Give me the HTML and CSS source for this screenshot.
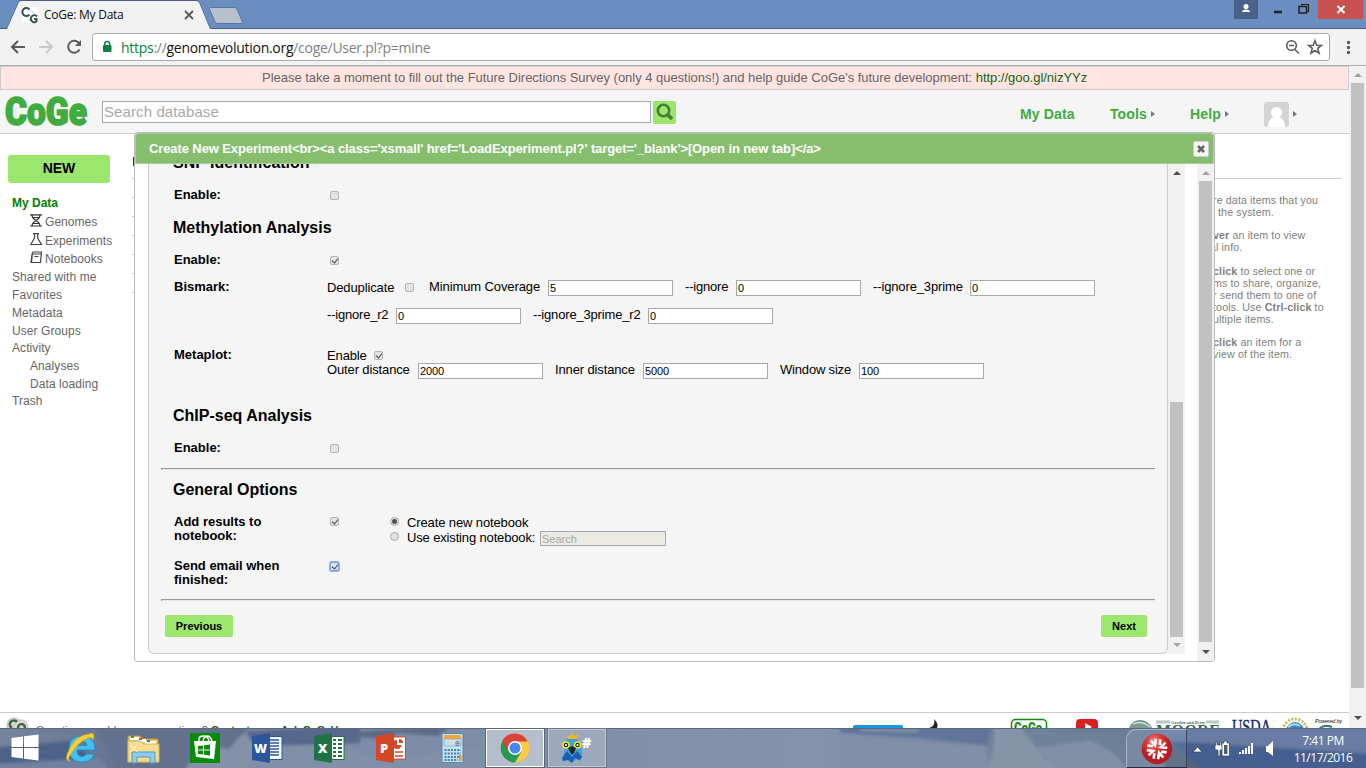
FILE: index.html
```html
<!DOCTYPE html>
<html lang="en">
<head>
<meta charset="utf-8">
<title>CoGe: My Data</title>
<link rel="stylesheet" href="styles.css">
</head>
<body>
<div class="screen">
  <div class="titlebar">
    <svg class="tab-shapes" width="280" height="29" viewBox="0 0 280 29">
      <path d="M0 28.5H7L19 1.5Q20 .5 22 .5H196Q198 .5 199 2L210 28.5H280" fill="none" stroke="#485d8a"/>
      <path d="M7 29L19 2Q20 1 22 1H196Q198 1 199 2.500L210 29Z" fill="#f2f2f2"/>
      <path d="M210 7.500H234Q236 7.500 237 9L242.500 22Q243 23.500 241 23.500H218Q216 23.500 215 22L209.500 9Q209 7.500 210 7.500Z" fill="#b8c1cb" stroke="#5577a8"/>
      <rect x="22" y="7" width="16" height="16" fill="#fff"/>
      <path d="M29.500 9.500A4 4 0 1 0 29.500 14.500M37 16.500A3.500 3.500 0 1 0 36.500 21.500V19H34" fill="none" stroke="#34525e" stroke-width="2"/>
      <path d="M29 9L36 15M25 16L30 21" stroke="#6fae65" stroke-dasharray="1 1"/>
      <path d="M185 11L193 19M193 11L185 19" stroke="#5a5a5a" stroke-width="1.800"/>
    </svg>
    <span class="tab-title">CoGe: My Data</span>
    <div class="window-buttons">
      <svg width="24" height="19"><rect width="24" height="19" fill="#4a628a"/><circle cx="12" cy="6.500" r="2.500" fill="#fff"/><path d="M8 12Q8 9.500 12 9.500T16 12Z" fill="#fff"/></svg>
      <svg width="38" height="19"><path d="M16 12H24" stroke="#222" stroke-width="2.500"/></svg>
      <svg width="22" height="19"><path d="M5.500 5.500V4.500H12.500V11.500H11" stroke="#222" fill="none" stroke-width="1.200"/><rect x="3" y="6.500" width="7.500" height="6.500" stroke="#222" fill="none" stroke-width="1.500"/></svg>
      <svg width="45" height="19"><rect width="45" height="19" fill="#c75050"/><path d="M19.500 6L26.500 13M26.500 6L19.500 13" stroke="#fff" stroke-width="2"/></svg>
    </div>
  </div>

  <div class="toolbar">
    <svg class="nav" width="92" height="36" viewBox="0 29 92 36">
      <path d="M12 47H25M18 41L12 47L18 53" fill="none" stroke="#5a5a5a" stroke-width="2"/>
      <path d="M39 47H52M46 41L52 47L46 53" fill="none" stroke="#c9c9c9" stroke-width="2"/>
      <path d="M79.200 43.500A6 6 0 1 0 79.500 49.500" fill="none" stroke="#5a5a5a" stroke-width="2"/><path d="M81 40V46H75Z" fill="#5a5a5a"/>
    </svg>
    <div class="address">
      <svg width="28" height="26"><rect x="10" y="11" width="8.500" height="7" rx="1" fill="#0b8043"/><path d="M11.800 11V9.500Q11.800 7.500 14.200 7.500T16.600 9.500V11" fill="none" stroke="#0b8043" stroke-width="1.500"/></svg>
      <span class="url"><span class="secure">https</span>://<b>genomevolution.org</b>/coge/User.pl?p=mine</span>
      <svg class="address-icons" width="47" height="26"><circle cx="9.500" cy="11.500" r="4.800" fill="none" stroke="#5a5a5a" stroke-width="1.600"/><path d="M7 11.500H12M13 15.500L17 19.500" stroke="#5a5a5a" stroke-width="1.500"/><path d="M33 6.500L34.700 11.200L39.500 11.400L35.700 14.400L37.100 19.200L33 16.500L28.900 19.200L30.300 14.400L26.500 11.400L31.300 11.200Z" fill="none" stroke="#5a5a5a" stroke-width="1.500"/></svg>
    </div>
    <svg class="menu-dots" width="16" height="36"><g fill="#5a5a5a"><circle cx="8.500" cy="13.500" r="1.700"/><circle cx="8.500" cy="18.500" r="1.700"/><circle cx="8.500" cy="23.500" r="1.700"/></g></svg>
  </div>

  <div class="viewport">
    <div class="page">
      <div class="notice"><span>Please take a moment to fill out the Future Directions Survey (only 4 questions!) and help guide CoGe's future development: <a>http://goo.gl/nizYYz</a></span></div>
      <header class="site-header">
        <svg class="logo" width="90" height="43"><text x="5" y="34.500" textLength="82" lengthAdjust="spacingAndGlyphs">CoGe</text></svg>
        <div class="site-search">Search database</div>
        <div class="search-button"><svg width="23" height="23"><circle cx="10.500" cy="9.500" r="5.700" fill="none" stroke="#4c7b37" stroke-width="2.600"/><path d="M14.500 13.500L19 18" stroke="#4c7b37" stroke-width="3.500"/></svg></div>
        <nav class="site-menu">
          <span class="menu-data">My Data</span>
          <span class="menu-tools">Tools<i></i></span>
          <span class="menu-help">Help<i></i></span>
          <span class="menu-user"><svg width="25" height="25"><rect width="25" height="25" rx="3" fill="#d4d4d4"/><circle cx="12.500" cy="10.500" r="5.500" fill="#fff"/><path d="M4 25Q4 17 10 15H15Q21 17 21 25Z" fill="#fff"/></svg><i></i></span>
        </nav>
      </header>

      <div class="body">
        <aside class="sidebar">
          <div class="new-button">NEW</div>
          <ul>
            <li class="current">My Data</li>
            <li class="sub"><svg width="13" height="13"><path d="M0 .8H12M0 12H12M2 1Q2 4 6 6.500T10 12M10 1Q10 4 6 6.500T2 12M3 3.500H9M3 9.500H9" fill="none" stroke="#333" stroke-width="1.200"/></svg><span>Genomes</span></li>
            <li class="sub"><svg width="13" height="13"><path d="M3 .7H9M4.500 1V5L.8 11.500H11.500L7.700 5V1" fill="none" stroke="#444" stroke-width="1.200"/></svg><span>Experiments</span></li>
            <li class="sub"><svg width="13" height="13"><path d="M3 1H11.500L10.500 11.500H1L2 3.500ZM2.500 1.500L1.500 11M3 3H11M4.500 5.500H8.500" fill="none" stroke="#444" stroke-width="1.200"/></svg><span>Notebooks</span></li>
            <li>Shared with me</li>
            <li>Favorites</li>
            <li>Metadata</li>
            <li class="tight">User Groups</li>
            <li>Activity</li>
            <li class="sub">Analyses</li>
            <li class="sub tight">Data loading</li>
            <li>Trash</li>
          </ul>
        </aside>
        <div class="list-lines"><b></b><i></i><i></i><i></i><i></i><i></i><i></i><i></i></div>
        <aside class="help">
          <hr>
          <p><span>re data items that you</span><span class="in">the system.</span></p>
          <p><span><b>ver</b> an item to view</span><span class="out">al info.</span></p>
          <p><span><b>click</b> to select one or</span><span>ms to share, organize,</span><span>r send them to one of</span><span>tools. Use <b>Ctrl-click</b> to</span><span>ultiple items.</span></p>
          <p><span><b>click</b> an item for a</span><span>view of the item.</span></p>
        </aside>
      </div>

      <footer class="site-footer">
        <svg class="coge-badge" width="36" height="15"><circle cx="14" cy="12" r="7" fill="#ddd" stroke="#bbb"/><circle cx="21" cy="14" r="7" fill="#ddd" stroke="#bbb"/><path d="M17 9A4 4 0 1 0 12 15M25 15A3.500 4 0 0 0 18 15" fill="none" stroke="#3f6b3b" stroke-width="2.600"/></svg>
        <span class="contact">Questions, problems, suggestions? <b>Contact us</b> or <b>Ask CoGeV</b></span>
        <svg class="sponsors" width="499" height="15" viewBox="850 713 499 15">
          <rect x="853" y="725" width="50" height="8" rx="2" fill="#1b95e0"/>
          <path d="M929 728Q936 726 934 719Q939 724 937 728Z" fill="#222"/>
          <rect x="1011.500" y="719.500" width="35" height="20" rx="4" fill="#fff" stroke="#138a13" stroke-width="1.500"/>
          <text x="1014" y="733" font-family="Roboto" font-weight="900" font-size="14" fill="#138a13" textLength="28" lengthAdjust="spacingAndGlyphs">CoGe</text>
          <rect x="1076" y="719" width="22" height="15" rx="4" fill="#d8201f"/><path d="M1085 723L1092 727L1085 731Z" fill="#fff"/>
          <path d="M1129 728Q1132 720 1140 720T1152 728Z" fill="#789c8e"/><path d="M1133 724Q1142 720 1150 727" stroke="#fff" fill="none"/>
          <path d="M1156 722H1170M1206 722H1219" stroke="#b6c8c0" stroke-width="3"/>
          <text x="1171" y="723.500" font-family="Liberation Serif" font-weight="700" font-size="4" fill="#376a57" textLength="34">Gordon and Betty</text>
          <text x="1156" y="736" font-family="Liberation Serif" font-weight="700" font-size="16" fill="#376a57" textLength="64">MOORE</text>
          <text x="1232" y="732.500" font-family="Liberation Serif" font-size="19" fill="#172a68" stroke="#172a68" stroke-width=".4" textLength="39" lengthAdjust="spacingAndGlyphs">USDA</text>
          <circle cx="1295" cy="731" r="12" fill="none" stroke="#d8b44d" stroke-width="3" stroke-dasharray="2 1.500"/><circle cx="1295" cy="731" r="9" fill="#3386c8"/><path d="M1288 727Q1294 722 1300 726" stroke="#b9d9ed" stroke-width="2" fill="none"/>
          <text x="1315" y="723" font-family="Liberation Sans" font-style="italic" font-size="5.500" fill="#111" textLength="27">Powered by</text>
          <path d="M1319 729Q1324 724 1332 727" stroke="#3d7790" stroke-width="2" fill="none"/>
        </svg>
      </footer>
    </div>
    <div class="page-scroll"><i class="up dim"></i><div class="thumb"></div><i class="down"></i></div>

    <section class="dialog">
      <div class="dialog-title"><span>Create New Experiment&lt;br&gt;&lt;a class='xsmall' href='LoadExperiment.pl?' target='_blank'&gt;[Open in new tab]&lt;/a&gt;</span>
        <div class="close"><svg width="14" height="14"><path d="M4 4L10 10M10 4L4 10" stroke="#666" stroke-width="2.600"/></svg></div>
      </div>
      <div class="dialog-body">
        <div class="panel">
          <h2 class="first">SNP Identification</h2>
          <div class="row h31"><label>Enable:</label><i class="check"></i></div>
          <h2>Methylation Analysis</h2>
          <div class="row h27"><label>Enable:</label><i class="check on"></i></div>
          <div class="row h68"><label>Bismark:</label>
            <div class="fields">
              <div class="line h28"><span class="low w-dedup">Deduplicate</span><i class="check"></i><span class="w-mincov">Minimum Coverage</span><div class="input">5</div><span class="w-ign">--ignore</span><div class="input">0</div><span class="w-ign3">--ignore_3prime</span><div class="input">0</div></div>
              <div class="line"><span class="w-r2">--ignore_r2</span><div class="input">0</div><span class="w-3r2">--ignore_3prime_r2</span><div class="input">0</div></div>
            </div>
          </div>
          <div class="row h59"><label>Metaplot:</label>
            <div class="fields">
              <div class="line h15"><span class="low w-en">Enable</span><i class="check on meta"></i></div>
              <div class="line"><span class="w-outer">Outer distance</span><div class="input">2000</div><span class="w-inner">Inner distance</span><div class="input">5000</div><span class="w-win">Window size</span><div class="input">100</div></div>
            </div>
          </div>
          <h2>ChIP-seq Analysis</h2>
          <div class="row h28"><label>Enable:</label><i class="check"></i></div>
          <hr>
          <h2>General Options</h2>
          <div class="row h44"><label class="two">Add results to<br>notebook:</label><i class="check on high"></i>
            <div class="choices">
              <div><i class="radio on"></i><span class="w-create">Create new notebook</span></div>
              <div><i class="radio"></i><span class="w-use">Use existing notebook:</span><div class="input disabled">Search</div></div>
            </div>
          </div>
          <div class="row h41"><label class="two">Send email when<br>finished:</label><i class="check on focus"></i></div>
          <hr>
          <div class="actions"><span class="button prev">Previous</span><span class="button next">Next</span></div>
        </div>
        <div class="scroll inner"><i class="up"></i><div class="thumb"></div><i class="down dim"></i></div>
        <div class="scroll outer"><i class="up dim"></i><div class="thumb"></div><i class="down"></i></div>
      </div>
    </section>
  </div>

  <div class="taskbar">
    <svg class="wallpaper" width="1366" height="40" viewBox="0 728 1366 40" preserveAspectRatio="none">
      <defs>
        <linearGradient id="sky"><stop offset="0" stop-color="#76849f"/><stop offset=".09" stop-color="#667491"/><stop offset=".19" stop-color="#78879f"/><stop offset=".25" stop-color="#7b8ba6"/><stop offset=".42" stop-color="#8190a8"/><stop offset=".6" stop-color="#8493ac"/><stop offset=".73" stop-color="#71849b"/><stop offset=".82" stop-color="#6d7f98"/><stop offset="1" stop-color="#65799f"/></linearGradient>
        <filter id="soft" x="-5%" y="-20%" width="110%" height="140%"><feGaussianBlur stdDeviation="1.500"/></filter>
      </defs>
      <rect y="728" width="1366" height="40" fill="url(#sky)"/>
      <g filter="url(#soft)">
        <path d="M-4 747L70 741L112 772H-4Z" fill="#4d6289"/><path d="M-4 764L100 758L110 772H-4Z" fill="#7281a0"/>
        <path d="M94 724H250L236 746Q210 752 183 772H117Z" fill="#64728c"/>
        <path d="M245 732L360 724V743L280 746L240 740Z" fill="#56698d"/>
        <path d="M183 772L196 755L209 757L218 747L229 750L236 740L246 732L253 745L250 772Z" fill="#8492a7"/>
        <path d="M253 749Q320 740 356 751T486 746V772H247Z" fill="#8090a9"/>
        <path d="M355 732L382 730L423 728H449L438 736L398 733L385 739L356 737Z" fill="#5c6a84"/>
        <path d="M840 738L900 741L985 746L990 772H840Z" fill="#8190a8"/>
        <path d="M840 724H860V731L918 733L920 724H992L988 745L920 738L840 733Z" fill="#61759a"/>
        <path d="M994 724H1018L1043 757L1061 772H986Q996 749 994 728Z" fill="#8495a8"/>
        <path d="M1035 748L1090 740Q1120 754 1128 772H1060Z" fill="#8191a5"/>
        <path d="M1168 724H1370V751L1170 741Z" fill="#687da4"/>
        <path d="M1170 741L1370 754V772H1200L1178 750Z" fill="#445f90"/>
        <path d="M1168 742L1180 750L1206 772H1164Z" fill="#52647c"/>
      </g>
      <path d="M0 728.500H1366" stroke="#59677f"/>
    </svg>
    <div class="start"><svg width="50" height="40"><g fill="#fff"><path d="M11.500 10L23 8.500V19H11.500ZM24 8.300L38.500 6.500V19H24ZM11.500 20H23V30.500L11.500 29ZM24 20H38.500V32.500L24 30.700Z"/></g></svg></div>
    <div class="app"><svg width="62" height="40"><path d="M45 22Q45 8 32 8Q19 8 19 21Q19 34 32 34Q42 34 44 26H36Q35 28.500 32 28.500Q27 28.500 27 22ZM27 17.500Q28 13 32 13T37 17.500Z" fill="#45bff0" fill-rule="evenodd" stroke="#198bc8" stroke-width=".8"/><path d="M20 33Q13 33 20 20T39 6Q46 3 43 12Q42 7 34 12T21 26Q17 31 20 33Z" fill="#f8cf31" stroke="#dba616" stroke-width=".7"/></svg></div>
    <div class="app"><svg width="62" height="40"><path d="M16 8H28L31 11H46V34H16Z" fill="#e6c76c" stroke="#b5933b"/><path d="M18 9H27V12H18ZM26 11H34V14H26ZM33 13H44V16H33Z" fill="#fff"/><path d="M19 8H22V10H19Z" fill="#3a9b38"/><path d="M27 10H30V12H27Z" fill="#c84e38"/><path d="M35 12H38V14H35Z" fill="#2e79b8"/><path d="M16 13H28L31 16H47V34H16Z" fill="#f5dd90" stroke="#d4b55d"/><path d="M20 35V24H43V35H38V29H25V35Z" fill="#8bcbed" stroke="#5699bd"/><path d="M19 24L25 17M19 17L25 24" stroke="#fff8cf"/></svg></div>
    <div class="app"><svg width="62" height="40"><rect x="16" y="5" width="30" height="30" fill="#078a05"/><path d="M20 13H42L40 31L22 29Z" fill="#fff"/><path d="M25 13V10Q26 8 30 8Q34 8 35 13M29 13Q30 8 34 8Q37 9 38 13" fill="none" stroke="#fff" stroke-width="1.400"/><path d="M24 18L29 17.500V21.500H24ZM30 17.300L36 16.500V21.500H30ZM24 22.500H29V26.500L24 26ZM30 22.500H36V27.500L30 26.700Z" fill="#078a05"/></svg></div>
    <div class="app"><svg width="62" height="40"><rect x="32" y="8.500" width="14" height="23" fill="#fff" stroke="#2b579a"/><path d="M34 12H43M34 15H43M34 18H43M34 21H43M34 24H43M34 27H43" stroke="#2b579a" stroke-width="1.300"/><path d="M16 8L34 5V35L16 32Z" fill="#2b579a"/><text x="18" y="25" class="office" textLength="13" lengthAdjust="spacingAndGlyphs">W</text></svg></div>
    <div class="app"><svg width="62" height="40"><rect x="32" y="8.500" width="14" height="23" fill="#fff" stroke="#217346"/><path d="M35 12H38M40 12H44M35 16H38M40 16H44M35 20H38M40 20H44M35 24H38M40 24H44M35 28H38M40 28H44" stroke="#217346" stroke-width="2"/><path d="M16 8L34 5V35L16 32Z" fill="#217346"/><text x="20" y="25" class="office">X</text></svg></div>
    <div class="app"><svg width="62" height="40"><rect x="32" y="9" width="13.500" height="22" fill="#fff" stroke="#d24726"/><path d="M35 24H43M35 28H43" stroke="#d24726" stroke-width="1.500"/><path d="M37 12A4.500 4.500 0 1 0 41.500 17H37Z" fill="#d24726"/><path d="M39 11V15H43A4 4 0 0 0 39 11Z" fill="#d24726"/><path d="M16 8L34 5V35L16 32Z" fill="#d24726"/><text x="20" y="25" class="office">P</text></svg></div>
    <div class="app"><svg width="62" height="40"><rect x="20" y="5.500" width="21" height="29" rx="1" fill="#c2e3f5" stroke="#4d8ab4"/><rect x="22" y="7" width="17" height="4" fill="#f4a43a"/><rect x="22" y="11" width="17" height="7" fill="#cfdde5" stroke="#7ba1bd" stroke-width=".6"/><text x="33" y="17.500" font-family="Liberation Mono" font-size="8" fill="#345873">0</text><path d="M22.500 22H39M22.500 25.500H39M22.500 29H39M22.500 32H36" stroke="#4a7fa6" stroke-width="2" stroke-dasharray="2 1.200"/><rect x="37" y="27" width="2.500" height="6" fill="#f39422"/></svg></div>
    <div class="app open active"><svg width="58" height="38"><circle cx="29" cy="19" r="14.500" fill="#f9ca42"/><path d="M29 19L16.500 11.800A14.500 14.500 0 0 0 29 33.500L35.500 22.500Z" fill="#249a54"/><path d="M29 4.500A14.500 14.500 0 0 1 41.800 12.500H29L22.500 22.500L16.200 11.800A14.500 14.500 0 0 1 29 4.500Z" fill="#d9443a"/><circle cx="29" cy="19" r="7" fill="#fff"/><circle cx="29" cy="19" r="5.500" fill="#4587ee"/></svg></div>
    <div class="app open"><svg width="58" height="38"><path d="M17 12L20 9H28L31 12L34 20L34 28L33 32L29 30L24 34L20 31L14 32L16 24L17 18Z" fill="#3ba4e0"/><path d="M14 29L19 22L24 28L29 22L34 28L31 31L27 29L24 34L20 31L15 32Z" fill="#1c5eae"/><path d="M20 10L19 6L22 7L24 3L26 7L30 5L29 10Z" fill="#f1b52b"/><circle cx="18" cy="16" r="3" fill="#222" stroke="#e9e82a" stroke-width="1.600"/><circle cx="29.500" cy="16" r="3" fill="#222" stroke="#e9e82a" stroke-width="1.600"/><circle cx="18" cy="16" r="1.100" fill="#fff"/><circle cx="29.500" cy="16" r="1.100" fill="#fff"/><path d="M20 19L24 17L28 19L26 24L24 26L22 23Z" fill="#252525"/><text x="34" y="19" font-family="Open Sans" font-size="14" font-weight="800" fill="#fff">#</text></svg></div>
    <div class="tray-app"><svg width="59" height="37"><defs><radialGradient id="red" cx=".4" cy=".25"><stop stop-color="#f98a84"/><stop offset=".5" stop-color="#dd3936"/><stop offset="1" stop-color="#b51f24"/></radialGradient></defs><circle cx="30" cy="19" r="15.300" fill="url(#red)"/><g fill="none" stroke="#fff" stroke-width="2.700" transform="rotate(8 30 19)"><path d="M27.500 9V15.500L22.500 11.500M40 16.500H33.500L37.500 11.500M32.500 29V22.500L37.500 26.500M20 21.500H26.500L22.500 26.500M20 17H25.500M32 9V14.500M40 21H34.500M28 29V23.500"/></g></svg></div>
    <svg class="tray" width="108" height="40" viewBox="1189 728 108 40"><g fill="#fff" stroke="#343f55" stroke-width=".7"><path d="M1195 752L1199.500 747L1204 752Z"/><path d="M1218 742H1219.500V745H1222V742H1223.500V745H1225V750H1222V756H1220V750H1217V745H1218Z"/><path d="M1224 743H1226V741H1229V743H1231.500V756H1224Z"/></g><path d="M1226 745V754H1229.500V745Z" fill="#4c5c78"/><path d="M1241 752H1243V754H1241ZM1244 750H1246V754H1244ZM1247 748H1249V754H1247ZM1250 746H1252V754H1250ZM1253 743H1255V754H1253ZM1268 746H1270L1275 741V756L1270 752H1268Z" fill="#fff"/></svg>
    <div class="clock"><span>7:41 PM</span><span>11/17/2016</span></div>
  </div>
</div>
</body>
</html>
```

FILE: styles.css
```css
* { box-sizing: border-box; }
body { margin: 0; overflow: hidden; font-family: "Liberation Sans", Arial, sans-serif; font-size: 13px; color: #000; }
svg { display: block; flex: none; }
.screen { width: 1366px; height: 768px; display: flex; flex-direction: column; overflow: hidden; background: #fff; }

/* browser chrome */
.titlebar { height: 29px; flex: none; background: #6a8ebf; border-bottom: 1px solid #485d8a; display: flex; align-items: flex-start; position: relative; }
.tab-shapes { position: absolute; left: 0; top: 0; }
.tab-title { position: relative; margin-left: 44px; font: 12px/30px "Open Sans", sans-serif; letter-spacing: -.25px; color: #111; }
.window-buttons { margin-left: auto; display: flex; margin-right: 3px; }
.toolbar { height: 37px; flex: none; background: #f2f2f2; border-bottom: 1px solid #b0b0b0; display: flex; }
.address { width: 1238px; height: 28px; margin-top: 4px; border: 1px solid #a9a9a9; border-radius: 3px; background: #fff; display: flex; }
.url { font: 14px/27px "Open Sans", sans-serif; letter-spacing: -.28px; color: #808080; }
.url b { font-weight: 400; color: #111; }
.secure { color: #0b8043; }
.address-icons { margin-left: auto; }
.menu-dots { margin-left: 10px; }

/* page */
.viewport { position: relative; height: 662px; flex: none; display: flex; }
.page { width: 1349px; height: 662px; display: flex; flex-direction: column; }
.notice { height: 24px; flex: none; background: #ffe4e1; border: 1px solid #ccc; color: #666; line-height: 22px; padding-left: 261px; letter-spacing: -.028px; white-space: nowrap; }
.notice a { color: #106510; }
.site-header { height: 44px; flex: none; background: #f5f5f5; border-bottom: 1px solid #ccc; display: flex; }
.logo { overflow: visible; }
.logo text { font: 900 39px Roboto, sans-serif; fill: #40ac40; stroke: #40ac40; stroke-width: 1.6px; }
.site-search { width: 549px; height: 22px; margin: 11px 3px 0 12px; border: 1px solid #a9a9a9; background: #fff; color: #a9a9a9; font-size: 15px; letter-spacing: .1px; line-height: 20px; padding-left: 1px; }
.search-button { width: 23px; height: 23px; margin-top: 11px; background: #9be76d; border-radius: 2px; margin-left: -1px; }
.site-menu { display: flex; margin-left: 344px; font-size: 14px; font-weight: bold; line-height: 48px; color: #40ac40; }
.site-menu span { display: flex; align-items: center; height: 48px; }
.site-menu i { border-left: 4px solid #777; border-top: 3px solid transparent; border-bottom: 3px solid transparent; margin-left: 4px; }
.menu-data { width: 90px; letter-spacing: .15px; }
.menu-tools { width: 80px; letter-spacing: .1px; }
.menu-help { width: 74px; letter-spacing: .15px; }
.body { height: 578px; flex: none; display: flex; }
.sidebar { width: 132px; padding: 21px 0 0 8px; color: #666; }
.new-button { width: 102px; height: 28px; border-radius: 3px; background: #9be76d; color: #000; font-size: 14px; font-weight: bold; line-height: 27px; text-align: center; }
.sidebar ul { list-style: none; margin: 10px 0 0; padding: 0 0 0 4px; }
.sidebar li { height: 18px; line-height: 19px; font-size: 12px; letter-spacing: .08px; display: flex; white-space: nowrap; }
.sidebar li.current { height: 19px; color: green; font-weight: bold; letter-spacing: 0; line-height: 20px; }
.sidebar li.sub { padding-left: 18px; }
.sidebar li.sub:has(svg) { height: 18.500px; letter-spacing: .05px; line-height: 20px; }
.sidebar li svg { margin: 2px 2px 0 0; }
.sidebar li.tight { height: 17px; line-height: 18px; }
.list-lines { width: 3px; padding-top: 23px; }
.list-lines b { display: block; width: 2px; height: 9px; margin-left: 1px; background: #5b2715; margin-bottom: 12px; }
.list-lines i { display: block; height: 1px; background: #ccc; margin-bottom: 18px; }
.help { width: 128px; margin-left: 1078px; font-size: 10.670px; line-height: 12px; color: #808080; white-space: nowrap; }
.help hr { margin: 44px 0 15px; border: 0; border-top: 1px solid #ccc; }
.help p { margin: 0 0 11.400px; }
.help span { display: block; letter-spacing: .12px; }
.help .in { padding-left: 5px; }
.help .out { margin-left: -3px; }
.site-footer { height: 16px; flex: none; border-top: 1px solid #ccc; display: flex; overflow: hidden; }
.contact { width: 814px; font-size: 11px; line-height: 13px; padding-top: 11px; color: #666; white-space: nowrap; }
.contact b { color: #106510; letter-spacing: -.3px; }
.page-scroll { width: 17px; background: #f1f1f1; display: flex; flex-direction: column; align-items: center; }
.page-scroll .thumb { width: 13px; height: 605px; background: #c1c1c1; margin-top: 6px; }
.page-scroll .up { margin-top: 7px; }
.page-scroll .down { margin-top: 28px; }
.up, .down { width: 0; border: 4px solid transparent; border-top-width: 0; border-bottom: 4px solid #505050; }
.down { border-bottom-width: 0; border-top: 4px solid #505050; }
.up.dim { border-bottom-color: #a3a3a3; }
.down.dim { border-top-color: #a3a3a3; }

/* dialog */
.dialog { position: absolute; left: 134px; top: 66px; width: 1081px; height: 530px; border: 1px solid #bbb; border-radius: 3px; background: #fff; }
.dialog-title { height: 31px; background: #86be6e; border: 1px solid #aacb9b; border-radius: 3px 3px 0 0; color: #fff; font-weight: bold; line-height: 29px; letter-spacing: -.105px; padding-left: 13px; display: flex; justify-content: space-between; white-space: nowrap; }
.close { width: 16px; height: 16px; border: 1px solid #ccc; border-radius: 2px; background: #f6f6f6; margin: 7px 4px 0 0; }
.dialog-body { height: 497px; display: flex; padding-left: 13px; }
.panel { width: 1020px; height: 490px; border: 1px solid #ccc; border-top: 0; border-radius: 0 0 6px 6px; background: #f5f5f5; overflow: hidden; }
.panel h2 { margin: 0; height: 34px; padding-left: 24px; font-size: 16px; line-height: 20px; white-space: nowrap; }
.panel h2.first { margin-top: -11px; }
.row { display: flex; padding-left: 25px; line-height: 15px; }
.row label { width: 156px; font-weight: bold; line-height: 15px; }
.row .two { line-height: 14px; padding-top: 1px; }
.h31 { height: 31px; }
.h27 { height: 27px; }
.h28 { height: 28px; }
.h68 { height: 68px; }
.h59 { height: 59px; }
.h15 { height: 15px; }
.h44 { height: 44px; }
.h41 { height: 41px; }
.check { width: 9px; height: 9px; flex: none; border: 1px solid #b5b5b5; border-radius: 2px; background: #e4e4e4; margin: 4px 0 0 0; position: relative; }
.check.high { margin-top: 3px; }
.check.meta { margin: 4px 0 0 7px; }
.check.on::after { content: ""; position: absolute; left: 2px; top: 0; width: 3px; height: 5px; border: solid #444; border-width: 0 1.500px 1.500px 0; transform: rotate(38deg); }
.check.focus { border-color: #7ba5ef; box-shadow: 0 0 0 1px #8bb2f5; margin: 4px 0 0 0; }
.fields { margin-left: -3px; }
.line { display: flex; }
.line span { white-space: nowrap; margin-right: 8px; letter-spacing: -.13px; }
.line .low { padding-top: 1px; }
.input { width: 125px; height: 16px; flex: none; border: 1px solid #a9a9a9; background: #fff; font-size: 11px; line-height: 15px; letter-spacing: -.1px; padding-left: 1px; margin: 1px 12px 0 0; }
.line .w-dedup { width: 67px; margin-right: 11px; }
.line .w-dedup + .check { margin-right: 15px; }
.line .w-mincov { width: 111px; letter-spacing: -.1px; }
.line .w-ign { width: 43px; letter-spacing: -.2px; }
.line .w-ign3 { width: 89px; }
.line .w-r2 { width: 61px; letter-spacing: -.2px; }
.line .w-3r2 { width: 107px; letter-spacing: -.17px; }
.line .w-en { width: 40px; margin-right: 0; }
.w-outer { width: 83px; }
.w-inner { width: 80px; }
.line .w-win { width: 71px; letter-spacing: -.18px; }
.panel hr { width: 994px; height: 2px; margin: 0 0 10px 12px; border: 0; border-top: 1px solid #999; border-left: 1px solid #999; background: #e8e8e8; }
.choices { margin: 1px 0 0 51px; }
.choices > div { display: flex; height: 15px; }
.choices span { white-space: nowrap; margin-left: 8px; letter-spacing: -.12px; }
.choices .w-use { width: 129px; letter-spacing: -.15px; }
.radio { width: 9px; height: 9px; flex: none; border: 1px solid #aaa; border-radius: 50%; background: #e2e2e2; margin-top: 2px; display: flex; }
.radio.on::after { content: ""; width: 5px; height: 5px; margin: 1px; border-radius: 50%; background: #505050; }
.input.disabled { width: 126px; height: 15px; line-height: 14px; margin-left: 4px; letter-spacing: 0; background: #ebebe4; color: #a9a9a9; }
.actions { display: flex; justify-content: space-between; padding: 4px 20px 0 16px; }
.button { height: 22px; border-radius: 2px; background: #9be76d; font-size: 11px; font-weight: bold; line-height: 22px; text-align: center; }
.prev { width: 68px; }
.next { width: 46px; }
.scroll { width: 17px; background: #f1f1f1; display: flex; flex-direction: column; align-items: center; }
.scroll .up { margin-top: 7px; }
.scroll .thumb { width: 13px; background: #c1c1c1; }
.inner { height: 490px; }
.inner .thumb { height: 235px; margin-top: 227px; }
.inner .down { margin-top: 6px; }
.outer { margin-left: 12px; }
.outer .thumb { height: 461px; margin-top: 6px; }
.outer .down { margin-top: 8px; }

/* taskbar */
.taskbar { position: relative; z-index: 0; height: 40px; flex: none; display: flex; overflow: hidden; }
.wallpaper { position: absolute; left: 0; top: 0; z-index: -1; }
.start { width: 50px; }
.app { width: 62px; flex: none; }
.app.open { width: 58px; height: 38px; margin: 1px 2px 0; box-shadow: inset 0 0 0 1px #c3cad5, 0 0 0 1px #69758b; background: rgba(255,255,255,.22); }
.app.active { background: rgba(255,255,255,.42); box-shadow: inset 0 0 0 1px #fff, 0 0 0 1px #59657b; }
.office { font: 800 13px "Open Sans", sans-serif; fill: #fff; }
.tray-app { width: 61px; height: 39px; flex: none; margin: 1px 0 0 518px; border: 1px solid #adb7c5; border-right-color: #39465c; border-bottom-color: #222d40; border-radius: 10px 0 0 0; background: rgba(190,200,220,.15); }
.clock { width: 62px; display: flex; flex-direction: column; align-items: center; margin-left: -3px; font: 12px/17px "Open Sans", sans-serif; letter-spacing: -.5px; color: #fff; padding-top: 4px; }
```
